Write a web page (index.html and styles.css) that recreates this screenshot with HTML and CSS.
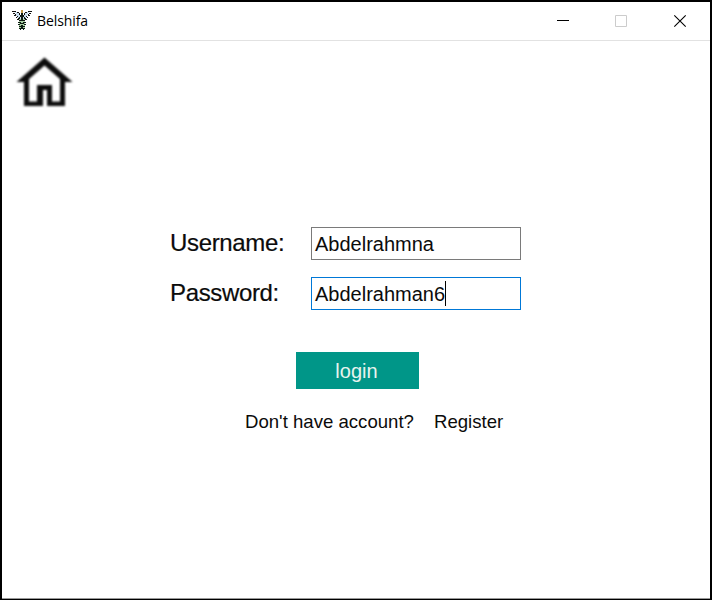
FILE: index.html
```html
<!DOCTYPE html>
<html lang="en">
<head>
<meta charset="utf-8">
<title>Belshifa</title>
<link rel="stylesheet" href="styles.css">
</head>
<body>
<div class="window">
  <header class="titlebar">
    <svg class="app-icon" viewBox="0 0 20 20" width="20" height="20" shape-rendering="crispEdges">
      <path d="M3 2h4l2 4v6L6 9zM17 2h-4l-2 4v6l3-3z" fill="#c9dcec"/>
      <path d="M7 9h6v10H7z" fill="#a9cfa4"/>
      <path d="M0 1h4v1H0zM5 2h2v1H5zM1 3h2v1H1zM7 3h1v2H7zM3 4h1v1H3zM2 5h2v1H2zM5 6h1v1H5zM4 7h1v1H4zM6 8h1v1H6zM5 9h2v1H5zM8 5h1v2H8zM7 10h2v1H7z" fill="#111"/>
      <path d="M16 1h4v1h-4zM13 2h2v1h-2zM17 3h2v1h-2zM12 3h1v2h-1zM16 4h1v1h-1zM16 5h2v1h-2zM14 6h1v1h-1zM15 7h1v1h-1zM13 8h1v1h-1zM13 9h2v1h-2zM11 5h1v2h-1zM11 10h2v1h-2z" fill="#111"/>
      <path d="M9 3h2v8H9zM7 7h1v2H7zM12 7h1v2h-1zM6 12h3v1H6zM11 12h3v1h-3zM8 13h4v1H8zM6 14h2v1H6zM12 14h2v1h-2zM7 16h2v1H7zM11 16h2v1h-2zM9 15h2v4H9zM7 18h2v1H7zM11 18h2v1h-2zM8 19h1v1H8zM11 19h1v1h-1z" fill="#0d1b12"/>
      <path d="M9 0h2v3H9z" fill="#c49a48"/>
    </svg>
    <span class="title">Belshifa</span>
    <svg class="controls" viewBox="0 0 140 20" width="140" height="20" fill="none">
      <path d="M7 10.500h12" stroke="#000"/>
      <path d="M65.500 5.500h11v11h-11z" stroke="#ccc"/>
      <path d="M124.300 5.300l11.400 11.400M135.700 5.300l-11.400 11.400" stroke="#000" stroke-width="1.1"/>
    </svg>
  </header>
  <main class="content">
    <svg class="home" viewBox="0 0 60 54" width="60" height="54">
      <path d="M1.500 27L29.500 2.500 57.500 27H50V51H32V35H28V51H9V27z" fill="#0c0c0c"/>
      <path d="M14 24L29.500 10.500 45 24V46.500H37V30H22V46.500H14z" fill="#fff"/>
      <path d="M22 30H37V51H32V35H27V51H22z" fill="#0c0c0c"/>
    </svg>
    <form class="form">
      <label for="user">Username:</label>
      <div class="field" id="user">Abdelrahmna</div>
      <label for="pass">Password:</label>
      <div class="field focused" id="pass">Abdelrahman6<i class="caret"></i></div>
    </form>
    <button class="login" type="button">login</button>
    <div class="signup"><span>Don't have account?</span><span>Register</span></div>
  </main>
</div>
</body>
</html>
```
FILE: styles.css
```css
* { box-sizing: border-box; }
body { margin: 0; background: #fff; color: #0b0b0b; font-family: "Liberation Sans", Arial, sans-serif; }
.window { width: 712px; height: 600px; border: 2px solid #000; border-bottom-width: 1px; display: flex; flex-direction: column; box-shadow: inset 0 -1px #999; }
.titlebar { height: 39px; flex: none; display: flex; align-items: center; padding: 0 20px 1px 10px; border-bottom: 1px solid #e2e2e2; }
.app-icon { margin-top: -2px; }
.title { margin-left: 5px; font: 14px/20px "Open Sans", "Noto Sans", sans-serif; letter-spacing: -.1px; color: #000; }
.controls { margin-left: auto; margin-top: -2px; }
.content { flex: 1; display: flex; flex-direction: column; padding-top: 14px; }
.home { margin-left: 13px; filter: blur(.8px); }
.form { display: grid; grid-template-columns: 141px 210px; row-gap: 17px; margin: 118px 0 0 168px; }
.form label { font-size: 24px; line-height: 32px; letter-spacing: -.35px; -webkit-text-stroke: .2px #0b0b0b; }
.field { height: 33px; border: 1px solid #7a7a7a; padding-left: 3px; font-size: 20px; line-height: 32px; display: flex; align-items: center; white-space: pre; }
.focused { border-color: #0078d7; }
.caret { width: 1px; height: 25px; background: #000; }
.login { width: 123px; height: 37px; margin: 42px 0 0 294px; padding: 0 2px 0 0; border: 0; background: #009688; color: #e8f3ee; font: 20px/36px "Liberation Sans", Arial, sans-serif; }
.signup { display: flex; gap: 20px; margin: 21px 0 0 243px; font-size: 18.600px; line-height: 24px; }
```
